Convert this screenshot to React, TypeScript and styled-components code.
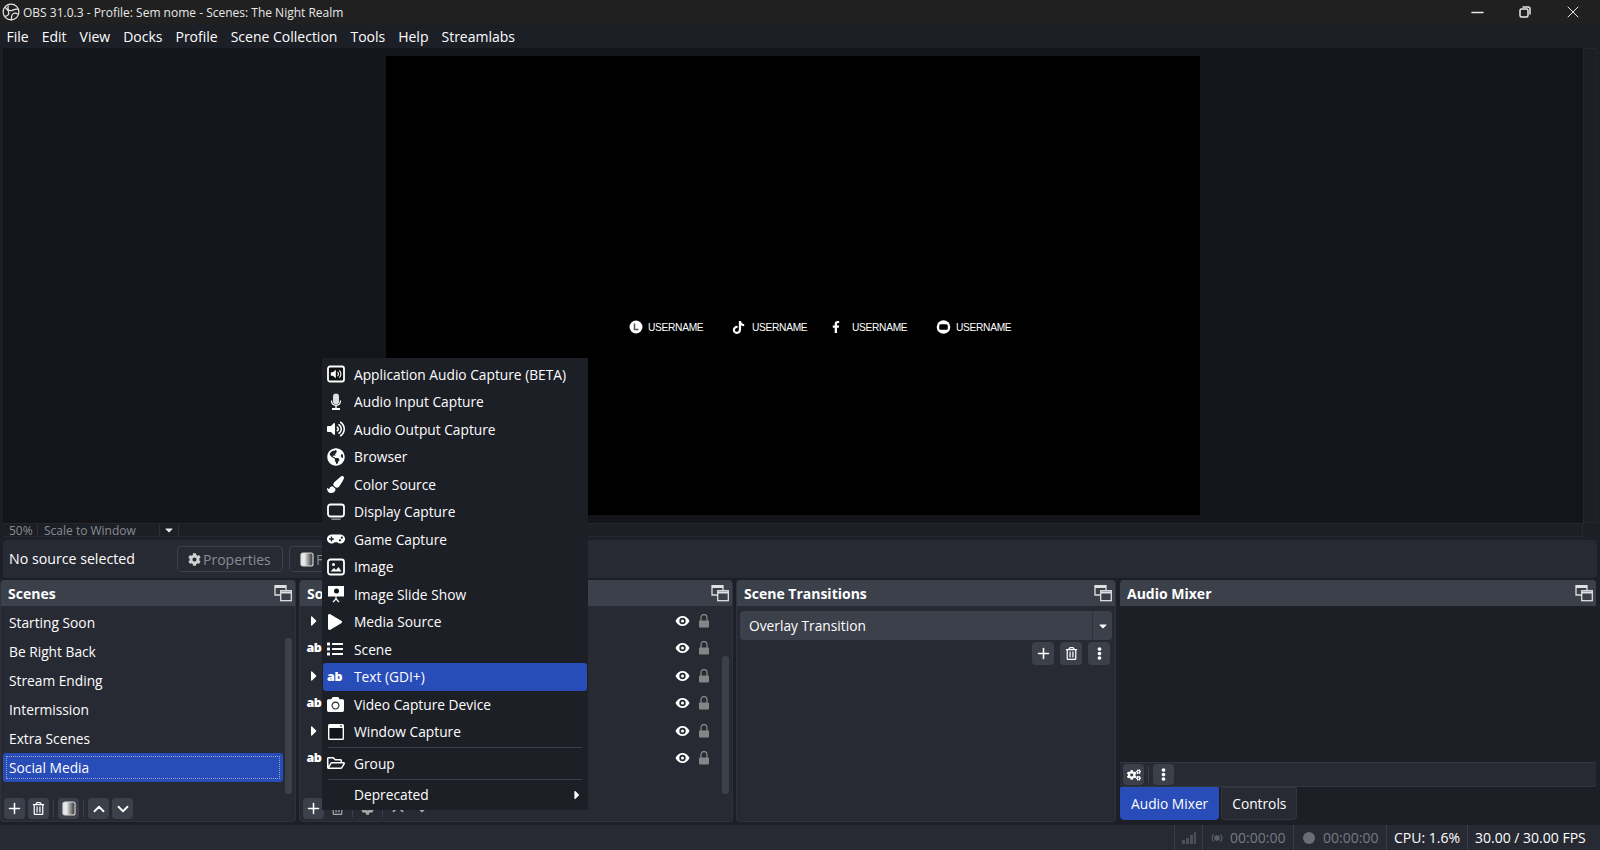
import React from "react";
import styled, { createGlobalStyle } from "styled-components";
import {
  FaCamera,
  FaCaretDown,
  FaCaretRight,
  FaCog,
  FaCogs,
  FaEllipsisV,
  FaFacebookF,
  FaGamepad,
  FaGlobeAmericas,
  FaList,
  FaPaintBrush,
  FaPlay,
  FaRegFolderOpen,
  FaRegTrashAlt,
  FaTiktok,
  FaVolumeUp,
} from "react-icons/fa";
import { ChevronDown, ChevronUp, Minus, Plus, X } from "lucide-react";

const BG = "#1d1f26";
const PANEL = "#272a33";
const HEADER = "#3c404b";
const BLUE = "#284cb8";

const GlobalStyle = createGlobalStyle`
  html, body {
    margin: 0;
    height: 100%;
    overflow: hidden;
    background: ${BG};
  }
  * {
    box-sizing: border-box;
  }
  body {
    font-family: "Open Sans", "Liberation Sans", sans-serif;
    font-size: 14px;
    color: #fefefe;
  }
`;

const Window = styled.div`
  width: 1600px;
  height: 850px;
  display: flex;
  flex-direction: column;
  background: ${BG};
  position: relative;
  overflow: hidden;
`;

const TitleBar = styled.header`
  height: 24px;
  flex: none;
  display: flex;
  align-items: center;
  background: #202020;
  padding: 0 3px 0 2px;
  color: #e8e8e8;
  font-size: 12px;
`;

const TitleText = styled.span`
  margin-left: 3px;
  flex-grow: 1;
`;

const WindowButton = styled.div`
  width: 48px;
  height: 24px;
  display: flex;
  align-items: center;
  justify-content: center;
  color: #e8e8e8;
`;

const MenuBar = styled.nav`
  height: 24px;
  flex: none;
  display: flex;
  align-items: center;
`;

const MenuItem = styled.span`
  padding: 0 6.5px;
`;

const PreviewRow = styled.div`
  height: 475px;
  flex: none;
  margin: 0 3px;
  display: flex;
`;

const Preview = styled.div`
  flex: 1;
  padding-top: 8px;
  background: #14151a;
  display: flex;
  justify-content: center;
`;

const PreviewScroll = styled.div`
  width: 14px;
  flex: none;
  border: 1px dotted #2c2e36;
  background: ${BG};
`;

const Canvas = styled.div`
  width: 814px;
  height: 459px;
  background: #000;
  display: flex;
  align-items: flex-start;
  padding: 264px 0 0 237px;
`;

const Social = styled.div<{ $width: number }>`
  width: ${(p) => p.$width}px;
  height: 14px;
  flex: none;
  display: flex;
  align-items: center;
  color: #fff;
  font-family: "Liberation Sans", Arial, sans-serif;
  font-size: 10.2px;
  letter-spacing: -0.3px;
`;

const SocialIcon = styled.span<{ $width: number }>`
  width: ${(p) => p.$width}px;
  flex: none;
  display: flex;
  align-items: center;
  justify-content: center;
`;

const ZoomBar = styled.div`
  height: 14px;
  flex: none;
  margin: 0 17px 0 3px;
  display: flex;
  align-items: center;
  border-top: 1px solid #262830;
  border-bottom: 1px solid #262830;
  border-right: 1px solid #262830;
  background: ${BG};
  color: #8a8c92;
  font-size: 12px;
`;

const ZoomCell = styled.div<{ $width: number; $center?: boolean }>`
  width: ${(p) => p.$width}px;
  flex: none;
  height: 100%;
  display: flex;
  align-items: center;
  justify-content: ${(p) => (p.$center ? "center" : "flex-start")};
  padding-left: ${(p) => (p.$center ? 0 : 6)}px;
  border-right: 1px solid #2e3038;
`;

const ContextBar = styled.div`
  height: 38px;
  flex: none;
  margin: 3px 3px 2px;
  padding: 0 6px;
  background: ${PANEL};
  border-radius: 4px;
  display: flex;
  align-items: center;
`;

const ContextLabel = styled.span`
  width: 168px;
  flex: none;
  font-size: 14.2px;
  padding-bottom: 2px;
`;

const ContextButton = styled.div<{ $width: number }>`
  width: ${(p) => p.$width}px;
  height: 26px;
  flex: none;
  margin-right: 6px;
  padding-left: 10px;
  border: 1px solid ${HEADER};
  border-radius: 4px;
  display: flex;
  align-items: center;
  gap: 2px;
  color: #8a8c92;
`;

const Docks = styled.main`
  height: 242px;
  flex: none;
  display: grid;
  grid-template-columns: 296px 434px 380px 478px;
  column-gap: 3px;
`;

const Dock = styled.section<{ $bare?: boolean }>`
  display: flex;
  flex-direction: column;
  min-width: 0;
  border-radius: 4px;
  overflow: hidden;
  background: ${(p) => (p.$bare ? "transparent" : PANEL)};
  border: 1px solid ${(p) => (p.$bare ? "transparent" : "#2f323c")};
  border-top: 0;
`;

const DockHeader = styled.h2`
  height: 26px;
  flex: none;
  margin: 0 -1px;
  padding: 0 4px 0 8px;
  background: ${HEADER};
  font-size: 14px;
  font-weight: 700;
  display: flex;
  align-items: center;
  justify-content: space-between;
`;

const DockBody = styled.div`
  flex: 1;
  min-height: 0;
  display: flex;
  position: relative;
`;

const RowList = styled.div`
  flex: 1;
  min-width: 0;
  padding: 2px 0 0 2px;
`;

const SourceList = styled(RowList)`
  padding-top: 1px;
`;

const SceneRow = styled.div<{ $selected?: boolean }>`
  height: 29px;
  padding: 0 6px;
  display: flex;
  align-items: center;
  font-size: 13.75px;
  border-radius: 3px;
  background: ${(p) => (p.$selected ? BLUE : "transparent")};
  outline: ${(p) => (p.$selected ? "1px dotted #9aa7cf" : "none")};
  outline-offset: -4px;
`;

const SourceRow = styled.div`
  height: 27.5px;
  display: flex;
  align-items: center;
  padding-left: 4px;
`;

const RowLead = styled.span`
  width: 16px;
  flex: none;
  display: flex;
  justify-content: center;
`;

const RowActions = styled.span`
  margin-left: auto;
  width: 35px;
  margin-right: 10px;
  display: flex;
  align-items: center;
  justify-content: space-between;
`;

const ScrollTrack = styled.div<{ $top: number }>`
  width: 7px;
  flex: none;
  margin: ${(p) => p.$top}px 3px 2px 2px;
  background: ${HEADER};
  border-radius: 3px;
`;

const Toolbar = styled.div`
  height: 25px;
  flex: none;
  padding: 0 3px;
  display: flex;
  align-items: center;
  gap: 3px;
`;

const ToolButton = styled.div<{ $flat?: boolean }>`
  width: 21px;
  height: 21px;
  flex: none;
  background: ${(p) => (p.$flat ? "transparent" : HEADER)};
  border-radius: 4px;
  display: flex;
  align-items: center;
  justify-content: center;
  color: ${(p) => (p.$flat ? "#a8a8a8" : "#fff")};
`;

const ToolSeparator = styled.span`
  width: 1px;
  height: 17px;
  flex: none;
  margin: 0 1px;
  background: ${HEADER};
`;

const TransitionBody = styled.div`
  flex: 1;
  padding: 5px 3px;
  display: flex;
  flex-direction: column;
`;

const Combo = styled.div`
  height: 29px;
  flex: none;
  background: ${HEADER};
  border-radius: 4px;
  display: flex;
  align-items: center;
  padding-left: 9px;
  font-size: 13.75px;
`;

const ComboLabel = styled.span`
  flex: 1;
`;

const ComboArrow = styled.span`
  width: 20px;
  height: 100%;
  border-left: 1px solid #2f323c;
  display: flex;
  align-items: center;
  justify-content: center;
`;

const TransitionTools = styled.div`
  margin-top: 2px;
  padding-right: 2px;
  display: flex;
  justify-content: flex-end;
  gap: 6px;
`;

const TransitionButton = styled(ToolButton)`
  width: 22px;
  height: 23px;
`;

const MixerBody = styled.div`
  flex: 1;
  margin: 0 -1px;
  background: ${BG};
`;

const MixerToolbar = styled(Toolbar)`
  background: ${PANEL};
  border: 1px solid #33363f;
  border-radius: 0 0 4px 4px;
  margin: 0 -1px;
  padding-left: 3px;
`;

const Tabs = styled.div`
  height: 33px;
  flex: none;
  display: flex;
  gap: 2px;
  margin-bottom: 1px;
  font-size: 13.75px;
`;

const Tab = styled.div<{ $active?: boolean }>`
  padding: 0 10px;
  display: flex;
  align-items: center;
  background: ${(p) => (p.$active ? BLUE : PANEL)};
  border: 1px solid ${(p) => (p.$active ? BLUE : "#33363f")};
  border-radius: 0 0 4px 4px;
`;

const StatusBar = styled.footer`
  height: 25px;
  flex: none;
  margin-top: 3px;
  padding-right: 5px;
  background: ${PANEL};
  display: flex;
  justify-content: flex-end;
  align-items: center;
`;

const StatusCell = styled.div<{ $width: number; $dim?: boolean }>`
  width: ${(p) => p.$width}px;
  height: 100%;
  flex: none;
  display: flex;
  align-items: center;
  padding-left: 7px;
  gap: 6px;
  border-left: 1px solid #3a3d47;
  color: ${(p) => (p.$dim ? "#777a82" : "#fefefe")};
`;

const ContextMenu = styled.div`
  position: absolute;
  left: 322px;
  top: 358px;
  width: 266px;
  height: 452px;
  padding: 2.5px 1px;
  background: ${BG};
  font-size: 13.75px;
`;

const MenuEntry = styled.div<{ $selected?: boolean }>`
  height: 27.5px;
  display: flex;
  align-items: center;
  padding-left: 4px;
  background: ${(p) => (p.$selected ? BLUE : "transparent")};
  border-radius: 3px;
`;

const MenuIcon = styled.span`
  width: 27px;
  height: 18px;
  flex: none;
  display: flex;
  align-items: center;
  color: #fff;
`;

const MenuArrow = styled.span`
  margin-left: auto;
  margin-right: 3px;
  display: flex;
`;

const MenuLine = styled.div`
  height: 1px;
  margin: 1.5px 5px;
  background: ${HEADER};
`;

const AbGlyph = styled.span`
  font-size: 12.5px;
  font-weight: 800;
  line-height: 18px;
  letter-spacing: -0.4px;
  color: #fff;
`;

const RecordDot = styled.span`
  width: 12px;
  height: 12px;
  flex: none;
  margin: 0 2px;
  border-radius: 50%;
  background: #6b6d73;
`;

const FloatGlyph = () => (
  <svg width="18" height="18" viewBox="0 0 18 18" fill="none" stroke="#e0e0e0" strokeWidth="1.3">
    <path d="M6 11H1V1.700H12V6" />
    <path d="M1 3h11" strokeWidth="2" />
    <rect x="6.700" y="6.700" width="10.600" height="10" fill={HEADER} />
    <path d="M6.700 8.500h10.600" strokeWidth="2" />
  </svg>
);

const ObsLogo = () => (
  <svg width="18" height="18" viewBox="0 0 18 18" fill="none" stroke="#e8e8e8" strokeWidth="1.200">
    <circle cx="9" cy="9" r="7.900" />
    <path d="M6.500 2.600C4.700 5.600 7 8.600 10.300 7.400c1.600-.6 3-2 5.900-1.100" />
    <path d="M15.800 11.300c-2.400-2.400-6-1-6.200 2.200-.1 1.300.2 2.600-.7 3.900" />
    <path d="M2.200 13C5.200 13.600 7.700 11.500 6.500 8.400 5.900 6.900 4.400 6.300 3.300 4.300" />
  </svg>
);

const RestoreGlyph = () => (
  <svg width="12" height="12" viewBox="0 0 12 12" fill="none" stroke="#e8e8e8" strokeWidth="1.500">
    <rect x="1" y="3" width="8" height="8" rx="1.500" />
    <path d="M3.500 1h5.500A2 2 0 0 1 11 3v5.500" />
  </svg>
);

const EyeGlyph = () => (
  <svg width="15" height="12" viewBox="0 0 15 12">
    <path d="M.5 6C2.200 2.600 4.600 1 7.500 1s5.300 1.600 7 5c-1.700 3.400-4.100 5-7 5s-5.300-1.600-7-5z" fill="#fff" />
    <circle cx="7.500" cy="6" r="3.200" fill="#272a33" />
    <circle cx="7.500" cy="6" r="1.500" fill="#fff" />
  </svg>
);

const LockGlyph = () => (
  <svg width="12" height="14" viewBox="0 0 12 14" fill="#858585">
    <path d="M3 7V3.500a3 3 0 0 1 6 0V7" fill="none" stroke="#858585" strokeWidth="1.300" />
    <rect x="1" y="6.500" width="10" height="7" rx="1" />
  </svg>
);

const AppAudioIcon = () => (
  <svg width="18" height="18" viewBox="0 0 18 18">
    <rect x="1" y="1.500" width="16" height="15" rx="2" fill="#111" stroke="#fff" strokeWidth="1.800" />
    <path d="M3.800 7.200h2l3-2.400v8.400l-3-2.400h-2z" fill="#fff" />
    <path d="M10.500 6.800a3 3 0 0 1 0 4.400M12.300 5.300a5 5 0 0 1 0 7.400" stroke="#fff" strokeWidth="1.100" fill="none" />
  </svg>
);

const MicIcon = () => (
  <svg width="18" height="18" viewBox="0 0 18 18">
    <rect x="6" y="0.500" width="6" height="11" rx="3" fill="#ddd" />
    <path d="M4.500 7.500c0 3 2 4.800 4.500 4.800s4.500-1.800 4.500-4.800" fill="none" stroke="#fff" strokeWidth="1.200" />
    <path d="M9 12v3" stroke="#fff" strokeWidth="1.400" />
    <rect x="5" y="15" width="8" height="2" fill="#fff" />
  </svg>
);

const DisplayIcon = () => (
  <svg width="18" height="18" viewBox="0 0 18 18" fill="none" stroke="#fff" strokeWidth="1.800">
    <rect x="1" y="1.500" width="16" height="12" rx="2.500" />
    <path d="M4.500 16.200h9" stroke="#999" strokeWidth="1.400" />
  </svg>
);

const ImageIcon = () => (
  <svg width="18" height="18" viewBox="0 0 18 18">
    <rect x="1" y="1.500" width="16" height="15" rx="2.500" fill="none" stroke="#fff" strokeWidth="1.800" />
    <circle cx="6.500" cy="6.500" r="1.500" fill="#fff" />
    <path d="M3.500 13.500l3.500-3.500 2 2 2.500-3 3 4.500z" fill="#fff" />
  </svg>
);

const SlideIcon = () => (
  <svg width="18" height="18" viewBox="0 0 18 18">
    <rect x="1" y="1" width="16" height="10.500" fill="#fff" />
    <circle cx="9.500" cy="6" r="2.500" fill="#111" />
    <path d="M9 11.500v3M9 14l-3 3M9 14l3 3" stroke="#fff" strokeWidth="1.300" fill="none" />
  </svg>
);

const WindowIcon = () => (
  <svg width="18" height="18" viewBox="0 0 18 18">
    <rect x="1" y="1" width="16" height="16" rx="1.500" fill="#fff" />
    <rect x="2.400" y="5" width="13.200" height="10.600" fill="#15161b" />
    <path d="M13 2l2 2M15 2l-2 2" stroke="#666" strokeWidth="0.800" />
  </svg>
);

const LogoRing = () => (
  <svg width="14" height="14" viewBox="0 0 14 14">
    <circle cx="7" cy="7" r="6.500" fill="#fff" />
    <path d="M5.500 3.500v6h4" stroke="#555" strokeWidth="1.500" fill="none" />
  </svg>
);

const PlayRing = () => (
  <svg width="15" height="14" viewBox="0 0 15 14">
    <circle cx="7.500" cy="7" r="6.800" fill="#fff" />
    <rect x="3.200" y="4.300" width="8.600" height="5.400" rx="1.500" fill="#000" />
  </svg>
);

const SignalGlyph = () => (
  <svg width="14" height="12" viewBox="0 0 14 12" fill="#4c4f57">
    <rect x="0" y="8" width="3" height="4" />
    <rect x="4" y="6" width="3" height="6" />
    <rect x="8" y="3" width="3" height="9" />
    <rect x="12" y="0" width="2" height="12" />
  </svg>
);

const BroadcastGlyph = () => (
  <svg width="14" height="12" viewBox="0 0 14 12" fill="none" stroke="#5c5f67" strokeWidth="1.200">
    <circle cx="7" cy="6" r="2.200" fill="#5c5f67" />
    <path d="M3.500 2.500a5 5 0 0 0 0 7M10.500 2.500a5 5 0 0 1 0 7" />
  </svg>
);

const FilterGlyph = ({ id }: { id: string }) => (
  <svg width="14" height="15" viewBox="0 0 14 15">
    <defs>
      <linearGradient id={id}>
        <stop offset="0.300" stopColor="#e8e8e8" />
        <stop offset="1" stopColor="#2a2a2a" />
      </linearGradient>
    </defs>
    <rect x="1" y="1" width="12" height="13" rx="2" fill={`url(#${id})`} stroke="#d8d8d8" strokeWidth="1.200" />
  </svg>
);

const menus = ["File", "Edit", "View", "Docks", "Profile", "Scene Collection", "Tools", "Help", "Streamlabs"];
const scenes = ["Starting Soon", "Be Right Back", "Stream Ending", "Intermission", "Extra Scenes", "Social Media"];
const sources = ["group", "text", "group", "text", "group", "text"];
const socials: { icon: React.ReactNode; iconWidth: number; width: number }[] = [
  { icon: <LogoRing />, iconWidth: 25, width: 101 },
  { icon: <FaTiktok size={13} />, iconWidth: 28, width: 96 },
  { icon: <FaFacebookF size={12} />, iconWidth: 32, width: 110 },
  { icon: <PlayRing />, iconWidth: 26, width: 90 },
];

const addItems: { label: string; icon: React.ReactNode; selected?: boolean }[] = [
  { label: "Application Audio Capture (BETA)", icon: <AppAudioIcon /> },
  { label: "Audio Input Capture", icon: <MicIcon /> },
  { label: "Audio Output Capture", icon: <FaVolumeUp size={18} /> },
  { label: "Browser", icon: <FaGlobeAmericas size={18} /> },
  { label: "Color Source", icon: <FaPaintBrush size={17} /> },
  { label: "Display Capture", icon: <DisplayIcon /> },
  { label: "Game Capture", icon: <FaGamepad size={18} /> },
  { label: "Image", icon: <ImageIcon /> },
  { label: "Image Slide Show", icon: <SlideIcon /> },
  { label: "Media Source", icon: <FaPlay size={16} /> },
  { label: "Scene", icon: <FaList size={16} /> },
  { label: "Text (GDI+)", icon: <AbGlyph>ab</AbGlyph>, selected: true },
  { label: "Video Capture Device", icon: <FaCamera size={17} /> },
  { label: "Window Capture", icon: <WindowIcon /> },
];

const App = () => {
  return (
    <Window>
      <GlobalStyle />
      <TitleBar>
        <ObsLogo />
        <TitleText>OBS 31.0.3 - Profile: Sem nome - Scenes: The Night Realm</TitleText>
        <WindowButton>
          <Minus size={19} strokeWidth={1.8} />
        </WindowButton>
        <WindowButton>
          <RestoreGlyph />
        </WindowButton>
        <WindowButton>
          <X size={20} strokeWidth={1.200} />
        </WindowButton>
      </TitleBar>
      <MenuBar>
        {menus.map((m) => (
          <MenuItem key={m}>{m}</MenuItem>
        ))}
      </MenuBar>

      <PreviewRow>
        <Preview>
          <Canvas>
            {socials.map((s, i) => (
              <Social key={i} $width={s.width}>
                <SocialIcon $width={s.iconWidth}>{s.icon}</SocialIcon>
                USERNAME
              </Social>
            ))}
          </Canvas>
        </Preview>
        <PreviewScroll />
      </PreviewRow>

      <ZoomBar>
        <ZoomCell $width={35}>50%</ZoomCell>
        <ZoomCell $width={122}>Scale to Window</ZoomCell>
        <ZoomCell $width={19} $center>
          <FaCaretDown size={12} color="#e8e8e8" />
        </ZoomCell>
      </ZoomBar>

      <ContextBar>
        <ContextLabel>No source selected</ContextLabel>
        <ContextButton $width={106}>
          <FaCog size={13} color="#d0d0d0" />
          Properties
        </ContextButton>
        <ContextButton $width={90}>
          <FilterGlyph id="filter-context" />
          Filters
        </ContextButton>
      </ContextBar>

      <Docks>
        <Dock>
          <DockHeader>
            Scenes
            <FloatGlyph />
          </DockHeader>
          <DockBody>
            <RowList>
              {scenes.map((s, i) => (
                <SceneRow key={s} $selected={i === 5}>
                  {s}
                </SceneRow>
              ))}
            </RowList>
            <ScrollTrack $top={32} />
          </DockBody>
          <Toolbar>
            <ToolButton>
              <Plus size={17} strokeWidth={2.2} />
            </ToolButton>
            <ToolButton>
              <FaRegTrashAlt size={13} />
            </ToolButton>
            <ToolSeparator />
            <ToolButton>
              <FilterGlyph id="filter-scenes" />
            </ToolButton>
            <ToolSeparator />
            <ToolButton>
              <ChevronUp size={18} strokeWidth={2.4} />
            </ToolButton>
            <ToolButton>
              <ChevronDown size={18} strokeWidth={2.4} />
            </ToolButton>
          </Toolbar>
        </Dock>

        <Dock>
          <DockHeader>
            Sources
            <FloatGlyph />
          </DockHeader>
          <DockBody>
            <SourceList>
              {sources.map((kind, i) => (
                <SourceRow key={i}>
                  <RowLead>
                    {kind === "group" ? <FaCaretRight size={16} /> : <AbGlyph>ab</AbGlyph>}
                  </RowLead>
                  <RowActions>
                    <EyeGlyph />
                    <LockGlyph />
                  </RowActions>
                </SourceRow>
              ))}
            </SourceList>
            <ScrollTrack $top={50} />
          </DockBody>
          <Toolbar>
            <ToolButton>
              <Plus size={17} strokeWidth={2.2} />
            </ToolButton>
            <ToolButton $flat>
              <FaRegTrashAlt size={13} />
            </ToolButton>
            <ToolSeparator />
            <ToolButton $flat>
              <FaCog size={13} />
            </ToolButton>
            <ToolSeparator />
            <ToolButton $flat>
              <ChevronUp size={18} strokeWidth={2.4} />
            </ToolButton>
            <ToolButton $flat>
              <ChevronDown size={18} strokeWidth={2.4} />
            </ToolButton>
          </Toolbar>
        </Dock>

        <Dock>
          <DockHeader>
            Scene Transitions
            <FloatGlyph />
          </DockHeader>
          <TransitionBody>
            <Combo>
              <ComboLabel>Overlay Transition</ComboLabel>
              <ComboArrow>
                <FaCaretDown size={12} />
              </ComboArrow>
            </Combo>
            <TransitionTools>
              <TransitionButton>
                <Plus size={17} strokeWidth={2.2} />
              </TransitionButton>
              <TransitionButton>
                <FaRegTrashAlt size={13} />
              </TransitionButton>
              <TransitionButton>
                <FaEllipsisV size={13} />
              </TransitionButton>
            </TransitionTools>
          </TransitionBody>
        </Dock>

        <Dock $bare>
          <DockHeader>
            Audio Mixer
            <FloatGlyph />
          </DockHeader>
          <MixerBody />
          <MixerToolbar>
            <ToolButton>
              <FaCogs size={14} />
            </ToolButton>
            <ToolSeparator />
            <ToolButton>
              <FaEllipsisV size={13} />
            </ToolButton>
          </MixerToolbar>
          <Tabs>
            <Tab $active>Audio Mixer</Tab>
            <Tab>Controls</Tab>
          </Tabs>
        </Dock>
      </Docks>

      <StatusBar>
        <StatusCell $width={28}>
          <SignalGlyph />
        </StatusCell>
        <StatusCell $width={91} $dim>
          <BroadcastGlyph />
          00:00:00
        </StatusCell>
        <StatusCell $width={93} $dim>
          <RecordDot />
          00:00:00
        </StatusCell>
        <StatusCell $width={81}>CPU: 1.6%</StatusCell>
        <StatusCell $width={128}>30.00 / 30.00 FPS</StatusCell>
      </StatusBar>

      <ContextMenu>
        {addItems.map((item) => (
          <MenuEntry key={item.label} $selected={item.selected}>
            <MenuIcon>{item.icon}</MenuIcon>
            {item.label}
          </MenuEntry>
        ))}
        <MenuLine />
        <MenuEntry>
          <MenuIcon>
            <FaRegFolderOpen size={18} />
          </MenuIcon>
          Group
        </MenuEntry>
        <MenuLine />
        <MenuEntry>
          <MenuIcon />
          Deprecated
          <MenuArrow>
            <FaCaretRight size={14} />
          </MenuArrow>
        </MenuEntry>
      </ContextMenu>
    </Window>
  );
};

export default App;
